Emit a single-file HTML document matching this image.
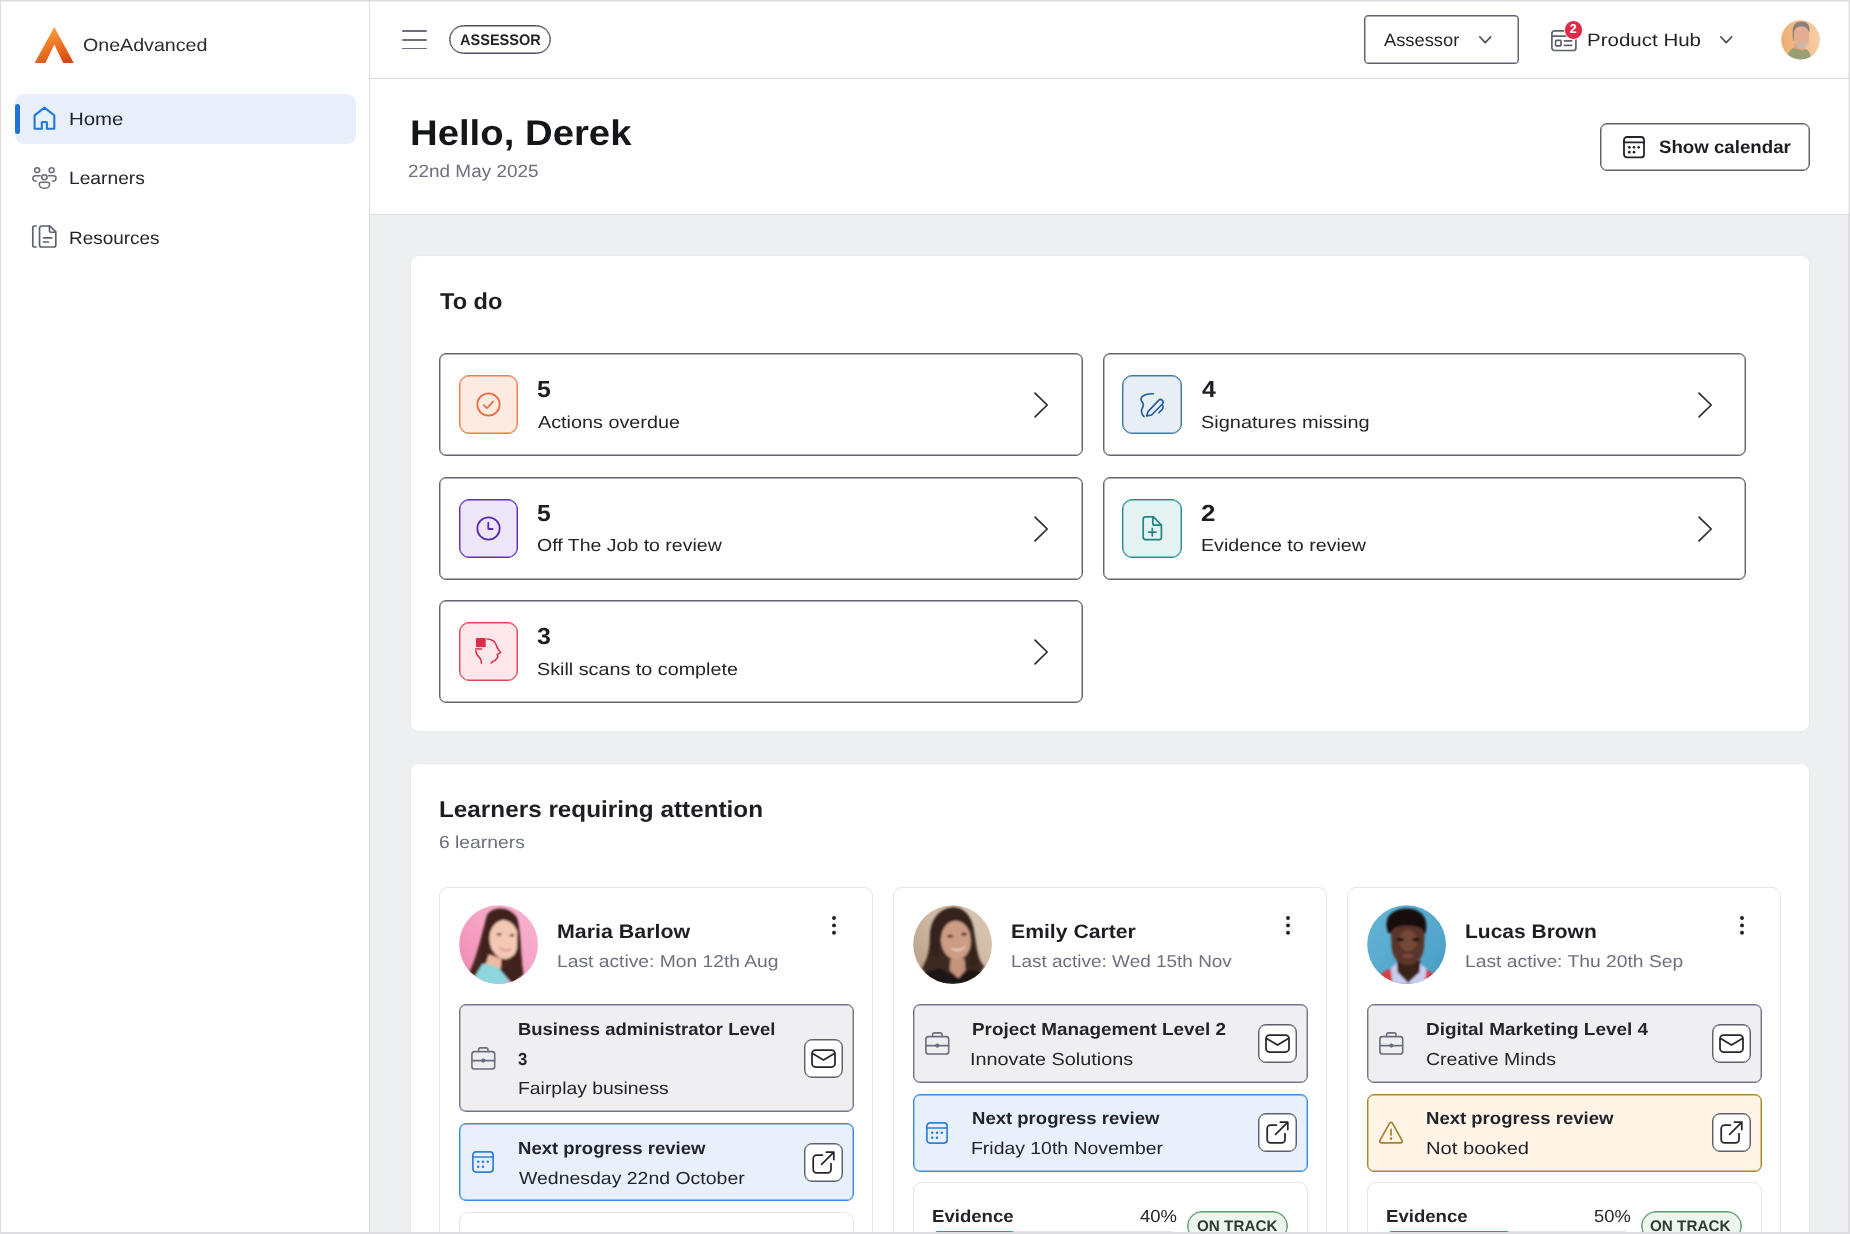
<!DOCTYPE html>
<html lang="en"><head><meta charset="utf-8"><title>OneAdvanced - Assessor Home</title>
<style>

*{box-sizing:border-box;margin:0;padding:0}
html,body{width:1850px;height:1234px;overflow:hidden;background:#fff}
body{font-family:"Liberation Sans",sans-serif;}
#app{position:relative;width:1850px;height:1234px;overflow:hidden;background:#fff}
.a{position:absolute}
.t{position:absolute;white-space:nowrap;transform-origin:0 0;display:block;text-rendering:geometricPrecision}
svg{position:absolute;overflow:visible}
.main{left:370px;top:215px;width:1480px;height:1019px;background:#eeeff1}
.card{background:#fff;border:1px solid #e9eaed;border-radius:9px}
.todo{background:#fff;color:#626573;border:1px solid currentColor;box-shadow:inset 0 0 0 .45px currentColor;border-radius:7px}
.ib{border-radius:10px;border:1px solid currentColor;box-shadow:inset 0 0 0 .45px currentColor}
.lc{background:#fff;border:1px solid #e3e4e8;border-radius:9px}
.box{border-radius:7px;border:1px solid currentColor;box-shadow:inset 0 0 0 .45px currentColor}
.btn{background:#fff;color:#5d606d;border:1px solid currentColor;box-shadow:inset 0 0 0 .45px currentColor;border-radius:8px}
.av{border-radius:50%;overflow:hidden}

</style></head>
<body>
<div id="app">
<div>
<div class="a main" style="left:370.0px;top:215.0px;width:1480.0px;height:1019.0px;left:370px"></div>
<div class="a " style="left:369.0px;top:0.0px;width:1.0px;height:1234.0px;background:#dcdde1"></div>
<div class="a " style="left:370.0px;top:78.0px;width:1480.0px;height:1.0px;background:#d9dade"></div>
<div class="a " style="left:370.0px;top:214.0px;width:1480.0px;height:1.0px;background:#dcdde1"></div>
</div>
<nav aria-label="Main navigation">
<svg style="left:34.0px;top:26.0px;" width="41.0" height="38.0" viewBox="0 0 41 38" preserveAspectRatio="none" fill="none" stroke-linecap="round" stroke-linejoin="round"><defs><linearGradient id="lg" x1="0.3" y1="0" x2="0.75" y2="1"><stop offset="0" stop-color="#f7a83a"/><stop offset="0.45" stop-color="#f07a28"/><stop offset="1" stop-color="#dc4716"/></linearGradient></defs><path d="M20.3 1 L39.8 37 L29.2 37 L20.3 18.5 L11.4 37 L0.6 37 Z" fill="url(#lg)" stroke="none"/></svg>
<div class="a " style="left:14.5px;top:94.0px;width:341.5px;height:50.0px;background:#e7effa;border-radius:9px"></div>
<div class="a " style="left:14.5px;top:104.0px;width:5.0px;height:30.0px;background:#1f72d8;border-radius:3px"></div>
<svg style="left:33.0px;top:106.0px;" width="23.0" height="24.0" viewBox="0 0 23 24" preserveAspectRatio="none" fill="none" stroke-linecap="round" stroke-linejoin="round"><path d="M1.6 22.8 V9.4 L11.45 1.7 L21.3 9.4 V22.8 H13.9 V16.6 a0.6 0.6 0 0 0 -0.6 -0.6 H9.4 a0.6 0.6 0 0 0 -0.6 0.6 V22.8 Z" stroke="#2478d8" stroke-width="2.1"/></svg>
<svg style="left:32.2px;top:167.3px;" width="24.8" height="22.0" viewBox="0 0 25 23.5" preserveAspectRatio="none" fill="none" stroke-linecap="round" stroke-linejoin="round"><g stroke="#6b6f7d" stroke-width="1.6"><circle cx="5.2" cy="3.4" r="2.5"/><circle cx="19.8" cy="3.4" r="2.5"/><circle cx="12.5" cy="11" r="2.7"/><path d="M8.2 9.3 H3.4 a2.6 2.6 0 0 0 -2.6 2.6 c0 1.7 1.3 2.9 3.2 3.3 M16.8 9.3 H21.6 a2.6 2.6 0 0 1 2.6 2.6 c0 1.7 -1.3 2.9 -3.2 3.3"/><path d="M7.3 18.3 a2 2 0 0 1 2 -2 h6.4 a2 2 0 0 1 2 2 c0 2.6 -2.2 4.4 -5.2 4.4 s-5.2 -1.8 -5.2 -4.4 Z"/></g></svg>
<svg style="left:32.2px;top:225.2px;" width="24.8" height="23.0" viewBox="0 0 25 24" preserveAspectRatio="none" fill="none" stroke-linecap="round" stroke-linejoin="round"><g stroke="#5d606d" stroke-width="1.7"><path d="M4.2 1 H2.4 a1.6 1.6 0 0 0 -1.6 1.6 V21.4 a1.6 1.6 0 0 0 1.6 1.6 H4.2"/><path d="M7.6 3.2 a2.2 2.2 0 0 1 2.2 -2.2 H18 L24 7.2 V20.8 a2.2 2.2 0 0 1 -2.2 2.2 H9.8 a2.2 2.2 0 0 1 -2.2 -2.2 Z"/><path d="M17.6 1.2 V6 a1.6 1.6 0 0 0 1.6 1.6 H23.8"/><path d="M11.6 13.4 H20 M11.6 17.8 H16.6"/></g></svg>
<span class="t" style="left:83.36px;top:36.59px;font-size:17.9px;line-height:17.9px;font-weight:400;color:#2b2c33;transform:scaleX(1.0964);">OneAdvanced</span>
<span class="t" style="left:68.61px;top:110.78px;font-size:17.9px;line-height:17.9px;font-weight:400;color:#23242b;transform:scaleX(1.1414);">Home</span>
<span class="t" style="left:68.70px;top:170.19px;font-size:17.9px;line-height:17.9px;font-weight:400;color:#23242b;transform:scaleX(1.0740);">Learners</span>
<span class="t" style="left:68.72px;top:230.48px;font-size:17.9px;line-height:17.9px;font-weight:400;color:#23242b;transform:scaleX(1.0584);">Resources</span>
</nav>
<header>
<div class="a " style="left:402.3px;top:30.4px;width:24.7px;height:1.6px;background:#6b6e7c;border-radius:1px"></div>
<div class="a " style="left:402.3px;top:39.2px;width:24.7px;height:1.6px;background:#6b6e7c;border-radius:1px"></div>
<div class="a " style="left:402.3px;top:47.8px;width:24.7px;height:1.6px;background:#6b6e7c;border-radius:1px"></div>
<div class="a " style="left:449.0px;top:25.0px;width:102.0px;height:29.2px;color:#4c4f5b;border:1px solid currentColor;box-shadow:inset 0 0 0 .45px currentColor;border-radius:15px"></div>
<div class="a " style="left:1364.0px;top:15.3px;width:155.0px;height:48.7px;color:#5d606d;border:1px solid currentColor;box-shadow:inset 0 0 0 .45px currentColor;border-radius:4px"></div>
<svg style="left:1479.0px;top:36.0px;" width="12.5" height="8.0" viewBox="0 0 12.5 8" preserveAspectRatio="none" fill="none" stroke-linecap="round" stroke-linejoin="round"><path d="M0.8 0.9 L6.25 6.6 L11.7 0.9" stroke="#4d505c" stroke-width="1.6"/></svg>
<svg style="left:1551.0px;top:29.5px;" width="26.0" height="21.5" viewBox="0 0 26 21.5" preserveAspectRatio="none" fill="none" stroke-linecap="round" stroke-linejoin="round"><g stroke="#5d606d" stroke-width="1.7"><rect x="0.9" y="0.9" width="24" height="19.6" rx="2.6"/><path d="M1 6.2 H24.8"/><rect x="4.6" y="10.4" width="5.4" height="5.4" rx="0.8"/><path d="M13.4 10.8 H20.6 M13.4 15.4 H20.6"/></g></svg>
<div class="a " style="left:1563.6px;top:20.4px;width:19.4px;height:19.4px;background:#df2a4a;border-radius:50%;border:1.2px solid #fff;color:#fff;font-size:12.5px;font-weight:700;line-height:17px;text-align:center">2</div>
<svg style="left:1720.0px;top:36.0px;" width="12.5" height="8.0" viewBox="0 0 12.5 8" preserveAspectRatio="none" fill="none" stroke-linecap="round" stroke-linejoin="round"><path d="M0.8 0.9 L6.25 6.6 L11.7 0.9" stroke="#4d505c" stroke-width="1.6"/></svg>
<svg style="left:1781.1px;top:20.1px;" width="39.2" height="39.6" viewBox="0 0 40 40" preserveAspectRatio="none" fill="none" stroke-linecap="round" stroke-linejoin="round"><defs><clipPath id="cd"><circle cx="20" cy="20" r="19.8"/></clipPath><linearGradient id="gd" x1="0" y1="0.5" x2="1" y2="0.4"><stop offset="0" stop-color="#edae74"/><stop offset="0.55" stop-color="#f2bd8c"/><stop offset="1" stop-color="#f6d0ac"/></linearGradient><filter id="bd" x="-10%" y="-10%" width="120%" height="120%"><feGaussianBlur stdDeviation="0.8"/></filter></defs><g clip-path="url(#cd)" stroke="none"><rect width="40" height="40" fill="url(#gd)"/><g filter="url(#bd)"><path d="M4.5 42 C6 33 10 29.5 14 27.5 L27 30 C30 33 30.5 37 31 42 Z" fill="#98a072"/><path d="M13 24 L24 26 L23 31 L14 29 Z" fill="#dfa283"/><ellipse cx="20.8" cy="16.5" rx="8" ry="11.5" fill="#e3ae92"/><path d="M12 14 C11 5 15 1.5 21 1.5 C27.5 1.5 30 6 29 13 C27 8 25 6.5 20.5 6.5 C16 6.5 14 8.5 13.4 13 L13 22 C12 20 12 17 12 14 Z" fill="#8d7f78"/><path d="M15.5 22 C17.5 24 24 24 26.5 21.5 C26.5 26 24.5 29 21.4 29 C18 29 16 26 15.5 22 Z" fill="#cbb9af"/></g></g></svg>
<span class="t" style="left:459.62px;top:32.99px;font-size:15.3px;line-height:15.3px;font-weight:700;color:#23242b;transform:scaleX(0.9501);">ASSESSOR</span>
<span class="t" style="left:1384.40px;top:31.79px;font-size:17.9px;line-height:17.9px;font-weight:400;color:#23242b;transform:scaleX(1.0231);">Assessor</span>
<span class="t" style="left:1586.95px;top:31.99px;font-size:17.9px;line-height:17.9px;font-weight:400;color:#23242b;transform:scaleX(1.1464);">Product Hub</span>
</header>
<section aria-label="Page header">
<div class="a " style="left:1600.3px;top:122.6px;width:209.7px;height:48.8px;color:#5d606d;border:1px solid currentColor;box-shadow:inset 0 0 0 .45px currentColor;border-radius:7px;background:#fff"></div>
<svg style="left:1623.0px;top:136.0px;" width="22.0" height="22.4" viewBox="0 0 22 22.4" preserveAspectRatio="none" fill="none" stroke-linecap="round" stroke-linejoin="round"><g stroke="#23242b" stroke-width="1.8"><rect x="1" y="1" width="20" height="20.4" rx="3"/><path d="M1 6.4 H21"/></g><g fill="#23242b" stroke="none"><circle cx="6.3" cy="11.3" r="1.35"/><circle cx="11" cy="11.3" r="1.35"/><circle cx="15.7" cy="11.3" r="1.35"/><circle cx="6.3" cy="16.2" r="1.35"/><circle cx="11" cy="16.2" r="1.35"/></g></svg>
<span class="t" style="left:409.67px;top:116.35px;font-size:35.7px;line-height:35.7px;font-weight:700;color:#15161a;transform:scaleX(1.0736);">Hello, Derek</span>
<span class="t" style="left:408.37px;top:162.66px;font-size:17.7px;line-height:17.7px;font-weight:400;color:#6d717f;transform:scaleX(1.0703);">22nd May 2025</span>
<span class="t" style="left:1658.98px;top:138.59px;font-size:17.9px;line-height:17.9px;font-weight:700;color:#1d1e24;transform:scaleX(1.0437);">Show calendar</span>
</section>
<section aria-label="To do">
<div class="a card" style="left:410.0px;top:255.0px;width:1400.0px;height:477.2px;"></div>
<div class="a todo" style="left:439.2px;top:353.1px;width:643.4px;height:103.0px;"></div>
<div class="a ib" style="left:459.0px;top:375.3px;width:59.2px;height:59.0px;color:#ee7b4a;background:#fdebe3"></div>
<svg style="left:476.1px;top:392.3px;" width="25.0" height="25.0" viewBox="0 0 25 25" preserveAspectRatio="none" fill="none" stroke-linecap="round" stroke-linejoin="round"><circle cx="12.5" cy="12.5" r="11.2" stroke="#ea6a35" stroke-width="1.7"/><path d="M7.6 13 L11 16.2 L17.2 9.4" stroke="#ea6a35" stroke-width="1.7"/></svg>
<svg style="left:1034.2px;top:392.1px;" width="14.5" height="26.0" viewBox="0 0 14.5 26" preserveAspectRatio="none" fill="none" stroke-linecap="round" stroke-linejoin="round"><path d="M1 1.2 L13.2 13 L1 24.8" stroke="#2b2c33" stroke-width="1.7"/></svg>
<div class="a todo" style="left:439.2px;top:476.6px;width:643.4px;height:103.0px;"></div>
<div class="a ib" style="left:459.0px;top:498.8px;width:59.2px;height:59.0px;color:#5f2fb8;background:#ece6f7"></div>
<svg style="left:476.1px;top:515.8px;" width="25.0" height="25.0" viewBox="0 0 25 25" preserveAspectRatio="none" fill="none" stroke-linecap="round" stroke-linejoin="round"><circle cx="12.5" cy="12.5" r="11.2" stroke="#5b2ab0" stroke-width="1.8"/><path d="M12.3 6.6 V13 H16.6" stroke="#5b2ab0" stroke-width="1.8"/></svg>
<svg style="left:1034.2px;top:515.6px;" width="14.5" height="26.0" viewBox="0 0 14.5 26" preserveAspectRatio="none" fill="none" stroke-linecap="round" stroke-linejoin="round"><path d="M1 1.2 L13.2 13 L1 24.8" stroke="#2b2c33" stroke-width="1.7"/></svg>
<div class="a todo" style="left:439.2px;top:600.0px;width:643.4px;height:103.0px;"></div>
<div class="a ib" style="left:459.0px;top:622.2px;width:59.2px;height:59.0px;color:#d8485e;background:#fde7ea"></div>
<svg style="left:475.4px;top:637.9px;" width="26.0" height="26.0" viewBox="0 0 26 26" preserveAspectRatio="none" fill="none" stroke-linecap="round" stroke-linejoin="round"><rect x="1" y="0" width="9.7" height="9.1" fill="#dc2d4b" stroke="none"/><path d="M0.2 10.9 H7.2" stroke="#dc2d4b" stroke-width="1.5" stroke-linecap="butt"/><path d="M12.3 1 C17 1.4 20.4 4 21.4 7.5 C22 10 23.6 12 25.7 14.6 L22.2 16.4 L22.9 19 L20.3 22.2 C18.4 22.6 17 23.6 16.2 25.2" stroke="#dc2d4b" stroke-width="1.5"/><path d="M0.8 12.8 C1 15.6 3 18.4 5.2 20.4 C6 21.8 6.3 23.6 6.5 25.2" stroke="#dc2d4b" stroke-width="1.5"/></svg>
<svg style="left:1034.2px;top:639.0px;" width="14.5" height="26.0" viewBox="0 0 14.5 26" preserveAspectRatio="none" fill="none" stroke-linecap="round" stroke-linejoin="round"><path d="M1 1.2 L13.2 13 L1 24.8" stroke="#2b2c33" stroke-width="1.7"/></svg>
<div class="a todo" style="left:1103.0px;top:353.1px;width:643.4px;height:103.0px;"></div>
<div class="a ib" style="left:1122.4px;top:375.3px;width:59.6px;height:59.0px;color:#4079a8;background:#e8eef6"></div>
<svg style="left:1140.4px;top:392.5px;" width="24.0" height="24.0" viewBox="0 0 24 24" preserveAspectRatio="none" fill="none" stroke-linecap="round" stroke-linejoin="round"><path d="M13.4 0.8 C10 0.6 7.4 1 5.3 1.8 C2 3.2 0.6 5 1.1 6.7 C1.6 8.6 3.4 10 3.4 11.8 C3.4 14 1.2 16 1.4 18.3 C1.6 20.6 2.6 22.4 4 23.5" stroke="#1f5c9c" stroke-width="1.6"/><path d="M6.6 22.9 L8 18.6 L18.6 7.4 A2.6 2.6 0 0 1 22.4 11 L11.6 22 Z" stroke="#1f5c9c" stroke-width="1.6"/><path d="M21.8 11.8 C23.6 12.8 23.4 15 22 16.6 L18.8 19.8" stroke="#1f5c9c" stroke-width="1.6"/></svg>
<svg style="left:1698.0px;top:392.1px;" width="14.5" height="26.0" viewBox="0 0 14.5 26" preserveAspectRatio="none" fill="none" stroke-linecap="round" stroke-linejoin="round"><path d="M1 1.2 L13.2 13 L1 24.8" stroke="#2b2c33" stroke-width="1.7"/></svg>
<div class="a todo" style="left:1103.0px;top:476.6px;width:643.4px;height:103.0px;"></div>
<div class="a ib" style="left:1122.4px;top:498.8px;width:59.6px;height:59.0px;color:#2a8f8f;background:#e4f2f1"></div>
<svg style="left:1141.7px;top:516.0px;" width="20.6" height="24.6" viewBox="0 0 20.6 24.6" preserveAspectRatio="none" fill="none" stroke-linecap="round" stroke-linejoin="round"><path d="M3.4 0.9 H11.4 L19.4 9 V21.4 A2.2 2.2 0 0 1 17.2 23.6 H3.4 A2.2 2.2 0 0 1 1.2 21.4 V3.1 A2.2 2.2 0 0 1 3.4 0.9 Z M10.8 1.2 V7.2 A2 2 0 0 0 12.8 9.2 H19" stroke="#1f8585" stroke-width="1.7"/><path d="M10.3 12.4 V19.8 M6.6 16.1 H14" stroke="#1f8585" stroke-width="1.7"/></svg>
<svg style="left:1698.0px;top:515.6px;" width="14.5" height="26.0" viewBox="0 0 14.5 26" preserveAspectRatio="none" fill="none" stroke-linecap="round" stroke-linejoin="round"><path d="M1 1.2 L13.2 13 L1 24.8" stroke="#2b2c33" stroke-width="1.7"/></svg>
<span class="t" style="left:439.99px;top:290.15px;font-size:23px;line-height:23px;font-weight:700;color:#1d1e24;transform:scaleX(1.0251);">To do</span>
<span class="t" style="left:536.93px;top:378.48px;font-size:23.2px;line-height:23.2px;font-weight:700;color:#1d1e24;transform:scaleX(1.0686);">5</span>
<span class="t" style="left:538.00px;top:414.21px;font-size:17.4px;line-height:17.4px;font-weight:400;color:#23242b;transform:scaleX(1.1379);">Actions overdue</span>
<span class="t" style="left:536.93px;top:501.93px;font-size:23.2px;line-height:23.2px;font-weight:700;color:#1d1e24;transform:scaleX(1.0686);">5</span>
<span class="t" style="left:536.88px;top:536.66px;font-size:17.4px;line-height:17.4px;font-weight:400;color:#23242b;transform:scaleX(1.1220);">Off The Job to review</span>
<span class="t" style="left:536.92px;top:625.38px;font-size:23.2px;line-height:23.2px;font-weight:700;color:#1d1e24;transform:scaleX(1.0760);">3</span>
<span class="t" style="left:536.86px;top:661.11px;font-size:17.4px;line-height:17.4px;font-weight:400;color:#23242b;transform:scaleX(1.1360);">Skill scans to complete</span>
<span class="t" style="left:1201.77px;top:378.48px;font-size:23.2px;line-height:23.2px;font-weight:700;color:#1d1e24;transform:scaleX(1.0711);">4</span>
<span class="t" style="left:1200.61px;top:414.21px;font-size:17.4px;line-height:17.4px;font-weight:400;color:#23242b;transform:scaleX(1.1476);">Signatures missing</span>
<span class="t" style="left:1200.75px;top:501.93px;font-size:23.2px;line-height:23.2px;font-weight:700;color:#1d1e24;transform:scaleX(1.1203);">2</span>
<span class="t" style="left:1200.63px;top:536.66px;font-size:17.4px;line-height:17.4px;font-weight:400;color:#23242b;transform:scaleX(1.1304);">Evidence to review</span>
</section>
<section aria-label="Learners requiring attention">
<div class="a card" style="left:410.0px;top:763.0px;width:1400.0px;height:537.0px;"></div>
<div class="a lc" style="left:439.0px;top:886.6px;width:434.0px;height:413.4px;"></div>
<svg style="left:458.8px;top:905.3px;" width="79.2" height="79.2" viewBox="0 0 80 80" preserveAspectRatio="none" fill="none" stroke-linecap="round" stroke-linejoin="round"><defs><linearGradient id="g0" x1="0" y1="1" x2="1" y2="0"><stop offset="0" stop-color="#ee86b0"/><stop offset="0.5" stop-color="#f5a2c4"/><stop offset="1" stop-color="#f8b4cf"/></linearGradient><clipPath id="c0"><circle cx="40" cy="40" r="39.8"/></clipPath><filter id="bl" x="-10%" y="-10%" width="120%" height="120%"><feGaussianBlur stdDeviation="1.1"/></filter></defs><g clip-path="url(#c0)" stroke="none"><rect width="80" height="80" fill="url(#g0)"/><g filter="url(#bl)"><path d="M28.5 10 C33 2 50 0 58.5 13 C63 26 62 50 65 70 L55 79 L38 66 L24 60 L17 73 L10.5 68 C19 50 23 28 28.5 10 Z" fill="#46251f"/><path d="M12 80 L16 72 L23.5 59.5 C30 57.5 36 60 40 63.5 L50.5 76 L47 81 Z" fill="#8ed5dc"/><path d="M30 50 L43 54 L42 65 C37 62 32 60 27 60 Z" fill="#efbaa5"/><ellipse cx="45.6" cy="34.8" rx="14.8" ry="19.8" fill="#f3c8b4" transform="rotate(-6 45.6 34.8)"/><path d="M28.5 10 C36 3 52 2 58.5 13 C60 17 60 22 60 26 C56 19 50 15 44 15 C36 17 31 24 29.8 34 C29.6 44 29.6 50 27.6 56 L20 62 C24 44 25 24 28.5 10 Z" fill="#41221d"/><path d="M59 22 C62 32 62 50 65 70 L55 79 L44 66 C50 62 56 54 58.5 44 Z" fill="#41221d"/><ellipse cx="40.5" cy="29.5" rx="2.6" ry="1.2" fill="#5a3a35"/><ellipse cx="53.5" cy="30.5" rx="2.4" ry="1.2" fill="#5a3a35"/><path d="M41 43.5 C44 47 50 47.5 53 44.5 C50 46 45 46 41 43.5 Z" fill="#e58f9c" stroke="#e58f9c" stroke-width="1.2"/></g></g></svg>
<svg style="left:829.6px;top:913.8px;" width="8.0" height="23.0" viewBox="0 0 8 23" preserveAspectRatio="none" fill="none" stroke-linecap="round" stroke-linejoin="round"><g fill="#1f2026" stroke="none"><circle cx="4" cy="4" r="1.95"/><circle cx="4" cy="11.4" r="1.95"/><circle cx="4" cy="18.8" r="1.95"/></g></svg>
<div class="a lc" style="left:893.0px;top:886.6px;width:434.0px;height:413.4px;"></div>
<svg style="left:912.8px;top:905.3px;" width="79.2" height="79.2" viewBox="0 0 80 80" preserveAspectRatio="none" fill="none" stroke-linecap="round" stroke-linejoin="round"><defs><linearGradient id="g1" x1="0" y1="1" x2="1" y2="0"><stop offset="0" stop-color="#b39780"/><stop offset="0.5" stop-color="#cdb7a1"/><stop offset="1" stop-color="#dbc8b5"/></linearGradient><clipPath id="c1"><circle cx="40" cy="40" r="39.8"/></clipPath></defs><g clip-path="url(#c1)" stroke="none"><rect width="80" height="80" fill="url(#g1)"/><g filter="url(#bl)"><path d="M40.5 2.5 C26 3 17 16 17 32 C17 46 14 56 9 64 L20 80 L62 80 L72 62 C66 56 65 46 63.5 38 C62 18 54 2 40.5 2.5 Z" fill="#3b2a23"/><path d="M4 80 C8 70 16 66 28 64 L44 74 L58 66 C66 66 72 70 76 80 Z" fill="#1b1615"/><path d="M38 54 L52 54 L53 66 L46 74 L37 66 Z" fill="#c4937a"/><ellipse cx="43.4" cy="35.5" rx="15.2" ry="19.8" fill="#cc9d84" transform="rotate(-4 43.4 35.5)"/><path d="M40.5 2.5 C52 2 60 12 62 28 C56 20 50 15 42 16 C35 17 30 22 28.5 32 C27 40 28 48 26 54 L18 50 C17 40 17 30 19 22 C22 10 30 3 40.5 2.5 Z" fill="#34241e"/><path d="M58 26 C62 36 62 50 66 58 L58 64 C58 54 59 40 58 26 Z" fill="#34241e"/><ellipse cx="37.5" cy="31.5" rx="3" ry="1.4" fill="#3c2822"/><ellipse cx="51.5" cy="29.5" rx="3" ry="1.4" fill="#3c2822"/><path d="M39 44 C43 47.5 50 46.5 53 42 C50 45 44 46 39 44 Z" fill="#ead2c8" stroke="#ead2c8" stroke-width="1"/></g></g></svg>
<svg style="left:1283.6px;top:913.8px;" width="8.0" height="23.0" viewBox="0 0 8 23" preserveAspectRatio="none" fill="none" stroke-linecap="round" stroke-linejoin="round"><g fill="#1f2026" stroke="none"><circle cx="4" cy="4" r="1.95"/><circle cx="4" cy="11.4" r="1.95"/><circle cx="4" cy="18.8" r="1.95"/></g></svg>
<div class="a lc" style="left:1347.0px;top:886.6px;width:434.0px;height:413.4px;"></div>
<svg style="left:1366.8px;top:905.3px;" width="79.2" height="79.2" viewBox="0 0 80 80" preserveAspectRatio="none" fill="none" stroke-linecap="round" stroke-linejoin="round"><defs><linearGradient id="g2" x1="0" y1="0" x2="1" y2="1"><stop offset="0" stop-color="#66b6d8"/><stop offset="1" stop-color="#489cc4"/></linearGradient><clipPath id="c2"><circle cx="40" cy="40" r="39.8"/></clipPath></defs><g clip-path="url(#c2)" stroke="none"><rect width="80" height="80" fill="url(#g2)"/><g filter="url(#bl)"><path d="M8 82 C10 70 18 66 26 64 L56 64 C64 66 70 70 72 82 Z" fill="#dc3a42"/><path d="M24 64 L30 58 L52 58 L60 64 L58.5 80 L26 80 Z" fill="#c6cdee"/><path d="M30 56 L54 56 L53 68 L41.5 78.5 L31 68 Z" fill="#3b2019"/><path d="M24.3 30 C24.3 20 30 16.5 41.2 16.5 C52.4 16.5 58.2 20 58.2 30 L57.6 43 C57 53 50 61 41.2 61 C32.4 61 25.5 53 24.9 43 Z" fill="#5a3529"/><ellipse cx="41.5" cy="36" rx="9" ry="11" fill="#84543f" opacity="0.65"/><path d="M21.4 28 C15.5 12 26 3.6 40.4 3.6 C53.5 3.6 63 12 59.2 28 L57.8 29 C57.2 23.5 52.6 21 40.8 21 C29 21 25 23.5 24.4 29 Z" fill="#120e0d"/><ellipse cx="33.5" cy="35" rx="4" ry="1.8" fill="#2a1712"/><ellipse cx="49.5" cy="35" rx="4" ry="1.8" fill="#2a1712"/><ellipse cx="41.3" cy="51.5" rx="5.4" ry="2" fill="#7c4a42"/></g></g></svg>
<svg style="left:1737.6px;top:913.8px;" width="8.0" height="23.0" viewBox="0 0 8 23" preserveAspectRatio="none" fill="none" stroke-linecap="round" stroke-linejoin="round"><g fill="#1f2026" stroke="none"><circle cx="4" cy="4" r="1.95"/><circle cx="4" cy="11.4" r="1.95"/><circle cx="4" cy="18.8" r="1.95"/></g></svg>
<div class="a box" style="left:458.9px;top:1004.4px;width:394.7px;height:108.0px;color:#74778a;background:#efeff2"></div>
<svg style="left:470.9px;top:1046.8px;" width="24.6" height="23.0" viewBox="0 0 24.6 23" preserveAspectRatio="none" fill="none" stroke-linecap="round" stroke-linejoin="round"><g stroke="#6b6f7d" stroke-width="1.6"><rect x="0.9" y="4.6" width="22.8" height="17.4" rx="2.6"/><path d="M7.6 4.4 V2.6 a1.7 1.7 0 0 1 1.7 -1.7 h6 a1.7 1.7 0 0 1 1.7 1.7 V4.4 M1 13.6 H23.6"/><circle cx="12.3" cy="13.6" r="1.3" fill="#6b6f7d"/></g></svg>
<div class="a btn" style="left:803.9px;top:1039.0px;width:39.6px;height:38.8px;"></div>
<svg style="left:811.1px;top:1048.9px;" width="25.0" height="19.0" viewBox="0 0 25 19" preserveAspectRatio="none" fill="none" stroke-linecap="round" stroke-linejoin="round"><g stroke="#26272d" stroke-width="1.75"><rect x="1" y="1" width="23" height="17" rx="3.4"/><path d="M1.6 4.4 L12.5 11 L23.4 4.4"/></g></svg>
<div class="a box" style="left:458.9px;top:1123.4px;width:394.7px;height:78.0px;color:#3b8ce0;background:#e8f0fb"></div>
<svg style="left:472.2px;top:1151.4px;" width="22.0" height="22.0" viewBox="0 0 22 22" preserveAspectRatio="none" fill="none" stroke-linecap="round" stroke-linejoin="round"><g stroke="#2f80d8" stroke-width="1.7"><rect x="0.9" y="0.9" width="20.2" height="20.2" rx="3"/><path d="M1 6 H21"/></g><g fill="#2f80d8" stroke="none"><circle cx="6.2" cy="10.8" r="1.3"/><circle cx="11" cy="10.8" r="1.3"/><circle cx="15.8" cy="10.8" r="1.3"/><circle cx="6.2" cy="15.8" r="1.3"/><circle cx="11" cy="15.8" r="1.3"/></g></svg>
<div class="a btn" style="left:803.9px;top:1143.0px;width:39.6px;height:38.8px;"></div>
<svg style="left:811.9px;top:1151.0px;" width="23.0" height="23.0" viewBox="0 0 23 23" preserveAspectRatio="none" fill="none" stroke-linecap="round" stroke-linejoin="round"><g stroke="#26272d" stroke-width="1.75"><path d="M10.4 4 H4.6 A3.4 3.4 0 0 0 1.2 7.4 V18.4 A3.4 3.4 0 0 0 4.6 21.8 H15.6 A3.4 3.4 0 0 0 19 18.4 V12.6"/><path d="M9.6 13.4 L21.6 1.4 M14.4 1.2 H21.8 V8.6"/></g></svg>
<div class="a lc" style="left:458.9px;top:1212.0px;width:394.7px;height:88.0px;"></div>
<div class="a box" style="left:912.9px;top:1004.4px;width:394.7px;height:78.4px;color:#74778a;background:#efeff2"></div>
<svg style="left:924.9px;top:1032.0px;" width="24.6" height="23.0" viewBox="0 0 24.6 23" preserveAspectRatio="none" fill="none" stroke-linecap="round" stroke-linejoin="round"><g stroke="#6b6f7d" stroke-width="1.6"><rect x="0.9" y="4.6" width="22.8" height="17.4" rx="2.6"/><path d="M7.6 4.4 V2.6 a1.7 1.7 0 0 1 1.7 -1.7 h6 a1.7 1.7 0 0 1 1.7 1.7 V4.4 M1 13.6 H23.6"/><circle cx="12.3" cy="13.6" r="1.3" fill="#6b6f7d"/></g></svg>
<div class="a btn" style="left:1257.9px;top:1024.2px;width:39.6px;height:38.8px;"></div>
<svg style="left:1265.1px;top:1034.1px;" width="25.0" height="19.0" viewBox="0 0 25 19" preserveAspectRatio="none" fill="none" stroke-linecap="round" stroke-linejoin="round"><g stroke="#26272d" stroke-width="1.75"><rect x="1" y="1" width="23" height="17" rx="3.4"/><path d="M1.6 4.4 L12.5 11 L23.4 4.4"/></g></svg>
<div class="a box" style="left:912.9px;top:1093.5px;width:394.7px;height:78.0px;color:#3b8ce0;background:#e8f0fb"></div>
<svg style="left:926.2px;top:1121.5px;" width="22.0" height="22.0" viewBox="0 0 22 22" preserveAspectRatio="none" fill="none" stroke-linecap="round" stroke-linejoin="round"><g stroke="#2f80d8" stroke-width="1.7"><rect x="0.9" y="0.9" width="20.2" height="20.2" rx="3"/><path d="M1 6 H21"/></g><g fill="#2f80d8" stroke="none"><circle cx="6.2" cy="10.8" r="1.3"/><circle cx="11" cy="10.8" r="1.3"/><circle cx="15.8" cy="10.8" r="1.3"/><circle cx="6.2" cy="15.8" r="1.3"/><circle cx="11" cy="15.8" r="1.3"/></g></svg>
<div class="a btn" style="left:1257.9px;top:1113.1px;width:39.6px;height:38.8px;"></div>
<svg style="left:1265.9px;top:1121.1px;" width="23.0" height="23.0" viewBox="0 0 23 23" preserveAspectRatio="none" fill="none" stroke-linecap="round" stroke-linejoin="round"><g stroke="#26272d" stroke-width="1.75"><path d="M10.4 4 H4.6 A3.4 3.4 0 0 0 1.2 7.4 V18.4 A3.4 3.4 0 0 0 4.6 21.8 H15.6 A3.4 3.4 0 0 0 19 18.4 V12.6"/><path d="M9.6 13.4 L21.6 1.4 M14.4 1.2 H21.8 V8.6"/></g></svg>
<div class="a lc" style="left:912.9px;top:1182.0px;width:394.7px;height:118.0px;"></div>
<div class="a box" style="left:1366.9px;top:1004.4px;width:394.7px;height:78.4px;color:#74778a;background:#efeff2"></div>
<svg style="left:1378.9px;top:1032.0px;" width="24.6" height="23.0" viewBox="0 0 24.6 23" preserveAspectRatio="none" fill="none" stroke-linecap="round" stroke-linejoin="round"><g stroke="#6b6f7d" stroke-width="1.6"><rect x="0.9" y="4.6" width="22.8" height="17.4" rx="2.6"/><path d="M7.6 4.4 V2.6 a1.7 1.7 0 0 1 1.7 -1.7 h6 a1.7 1.7 0 0 1 1.7 1.7 V4.4 M1 13.6 H23.6"/><circle cx="12.3" cy="13.6" r="1.3" fill="#6b6f7d"/></g></svg>
<div class="a btn" style="left:1711.9px;top:1024.2px;width:39.6px;height:38.8px;"></div>
<svg style="left:1719.1px;top:1034.1px;" width="25.0" height="19.0" viewBox="0 0 25 19" preserveAspectRatio="none" fill="none" stroke-linecap="round" stroke-linejoin="round"><g stroke="#26272d" stroke-width="1.75"><rect x="1" y="1" width="23" height="17" rx="3.4"/><path d="M1.6 4.4 L12.5 11 L23.4 4.4"/></g></svg>
<div class="a box" style="left:1366.9px;top:1093.5px;width:394.7px;height:78.0px;color:#a9852e;background:#fff4e6"></div>
<svg style="left:1379.4px;top:1120.5px;" width="24.0" height="23.0" viewBox="0 0 24 23" preserveAspectRatio="none" fill="none" stroke-linecap="round" stroke-linejoin="round"><g stroke="#a4822f" stroke-width="1.7"><path d="M12 1.4 a1.6 1.6 0 0 1 1.4 0.8 L23 19.4 a1.6 1.6 0 0 1 -1.4 2.4 H2.4 a1.6 1.6 0 0 1 -1.4 -2.4 L10.6 2.2 a1.6 1.6 0 0 1 1.4 -0.8 Z M12 8.4 V14"/></g><circle cx="12" cy="17.6" r="1.3" fill="#a4822f"/></svg>
<div class="a btn" style="left:1711.9px;top:1113.1px;width:39.6px;height:38.8px;"></div>
<svg style="left:1719.9px;top:1121.1px;" width="23.0" height="23.0" viewBox="0 0 23 23" preserveAspectRatio="none" fill="none" stroke-linecap="round" stroke-linejoin="round"><g stroke="#26272d" stroke-width="1.75"><path d="M10.4 4 H4.6 A3.4 3.4 0 0 0 1.2 7.4 V18.4 A3.4 3.4 0 0 0 4.6 21.8 H15.6 A3.4 3.4 0 0 0 19 18.4 V12.6"/><path d="M9.6 13.4 L21.6 1.4 M14.4 1.2 H21.8 V8.6"/></g></svg>
<div class="a lc" style="left:1366.9px;top:1182.0px;width:394.7px;height:118.0px;"></div>
<div class="a " style="left:1186.7px;top:1211.2px;width:101.0px;height:29.8px;color:#5b9a6c;border:1px solid currentColor;box-shadow:inset 0 0 0 .45px currentColor;background:#edf6ee;border-radius:15px"></div>
<div class="a " style="left:934.6px;top:1230.6px;width:238.4px;height:5.4px;background:#e3e4e8;border-radius:3px"></div>
<div class="a " style="left:934.6px;top:1230.6px;width:79.4px;height:5.4px;background:#2a9d9d;border-radius:3px"></div>
<div class="a " style="left:1640.7px;top:1211.2px;width:101.0px;height:29.8px;color:#5b9a6c;border:1px solid currentColor;box-shadow:inset 0 0 0 .45px currentColor;background:#edf6ee;border-radius:15px"></div>
<div class="a " style="left:1388.6px;top:1230.6px;width:238.4px;height:5.4px;background:#e3e4e8;border-radius:3px"></div>
<div class="a " style="left:1388.6px;top:1230.6px;width:120.0px;height:5.4px;background:#2a9d9d;border-radius:3px"></div>
<span class="t" style="left:438.94px;top:798.35px;font-size:23px;line-height:23px;font-weight:700;color:#1d1e24;transform:scaleX(1.0564);">Learners requiring attention</span>
<span class="t" style="left:438.89px;top:834.11px;font-size:17.4px;line-height:17.4px;font-weight:400;color:#6d717f;transform:scaleX(1.1092);">6 learners</span>
<span class="t" style="left:557.26px;top:923.02px;font-size:19.5px;line-height:19.5px;font-weight:700;color:#1d1e24;transform:scaleX(1.0976);">Maria Barlow</span>
<span class="t" style="left:557.23px;top:952.58px;font-size:17.2px;line-height:17.2px;font-weight:400;color:#6d717f;transform:scaleX(1.1200);">Last active: Mon 12th Aug</span>
<span class="t" style="left:1011.46px;top:923.02px;font-size:19.5px;line-height:19.5px;font-weight:700;color:#1d1e24;transform:scaleX(1.0868);">Emily Carter</span>
<span class="t" style="left:1011.43px;top:952.58px;font-size:17.2px;line-height:17.2px;font-weight:400;color:#6d717f;transform:scaleX(1.1025);">Last active: Wed 15th Nov</span>
<span class="t" style="left:1465.33px;top:923.02px;font-size:19.5px;line-height:19.5px;font-weight:700;color:#1d1e24;transform:scaleX(1.0761);">Lucas Brown</span>
<span class="t" style="left:1465.29px;top:952.58px;font-size:17.2px;line-height:17.2px;font-weight:400;color:#6d717f;transform:scaleX(1.1212);">Last active: Thu 20th Sep</span>
<span class="t" style="left:517.72px;top:1020.61px;font-size:17.4px;line-height:17.4px;font-weight:700;color:#23242b;transform:scaleX(1.0608);">Business administrator Level</span>
<span class="t" style="left:517.61px;top:1051.21px;font-size:17.4px;line-height:17.4px;font-weight:700;color:#23242b;transform:scaleX(0.9613);">3</span>
<span class="t" style="left:517.65px;top:1079.61px;font-size:17.4px;line-height:17.4px;font-weight:400;color:#23242b;transform:scaleX(1.1142);">Fairplay business</span>
<span class="t" style="left:517.71px;top:1140.21px;font-size:17.4px;line-height:17.4px;font-weight:700;color:#23242b;transform:scaleX(1.0651);">Next progress review</span>
<span class="t" style="left:518.76px;top:1169.81px;font-size:17.4px;line-height:17.4px;font-weight:400;color:#23242b;transform:scaleX(1.1188);">Wednesday 22nd October</span>
<span class="t" style="left:971.51px;top:1020.51px;font-size:17.4px;line-height:17.4px;font-weight:700;color:#23242b;transform:scaleX(1.0862);">Project Management Level 2</span>
<span class="t" style="left:970.44px;top:1051.01px;font-size:17.4px;line-height:17.4px;font-weight:400;color:#23242b;transform:scaleX(1.1402);">Innovate Solutions</span>
<span class="t" style="left:971.53px;top:1109.51px;font-size:17.4px;line-height:17.4px;font-weight:700;color:#23242b;transform:scaleX(1.0651);">Next progress review</span>
<span class="t" style="left:971.47px;top:1140.21px;font-size:17.4px;line-height:17.4px;font-weight:400;color:#23242b;transform:scaleX(1.1158);">Friday 10th November</span>
<span class="t" style="left:931.75px;top:1207.61px;font-size:17.4px;line-height:17.4px;font-weight:700;color:#23242b;transform:scaleX(1.0694);">Evidence</span>
<span class="t" style="left:1140.18px;top:1207.61px;font-size:17.4px;line-height:17.4px;font-weight:400;color:#23242b;transform:scaleX(1.0620);">40%</span>
<span class="t" style="left:1196.80px;top:1219.29px;font-size:15.3px;line-height:15.3px;font-weight:700;color:#2c3a30;transform:scaleX(0.9963);">ON TRACK</span>
<span class="t" style="left:1425.68px;top:1020.51px;font-size:17.4px;line-height:17.4px;font-weight:700;color:#23242b;transform:scaleX(1.0892);">Digital Marketing Level 4</span>
<span class="t" style="left:1425.76px;top:1051.01px;font-size:17.4px;line-height:17.4px;font-weight:400;color:#23242b;transform:scaleX(1.1200);">Creative Minds</span>
<span class="t" style="left:1425.71px;top:1109.51px;font-size:17.4px;line-height:17.4px;font-weight:700;color:#23242b;transform:scaleX(1.0651);">Next progress review</span>
<span class="t" style="left:1425.59px;top:1140.21px;font-size:17.4px;line-height:17.4px;font-weight:400;color:#23242b;transform:scaleX(1.1587);">Not booked</span>
<span class="t" style="left:1385.93px;top:1207.61px;font-size:17.4px;line-height:17.4px;font-weight:700;color:#23242b;transform:scaleX(1.0694);">Evidence</span>
<span class="t" style="left:1593.72px;top:1207.61px;font-size:17.4px;line-height:17.4px;font-weight:400;color:#23242b;transform:scaleX(1.0549);">50%</span>
<span class="t" style="left:1650.00px;top:1219.29px;font-size:15.3px;line-height:15.3px;font-weight:700;color:#2c3a30;transform:scaleX(0.9963);">ON TRACK</span>
</section>
<div>
<div class="a " style="left:0.0px;top:0.0px;width:1850.0px;height:1234.0px;border:1px solid #dbdbdd;border-bottom:2px solid #dedee0;pointer-events:none"></div>
<div class="a " style="left:1.0px;top:1.0px;width:1848.0px;height:1.0px;background:rgba(0,0,0,0.06)"></div>
<div class="a " style="left:1848.0px;top:2.0px;width:1.0px;height:1230.0px;background:rgba(0,0,0,0.06)"></div>
</div>
</div>
</body></html>
